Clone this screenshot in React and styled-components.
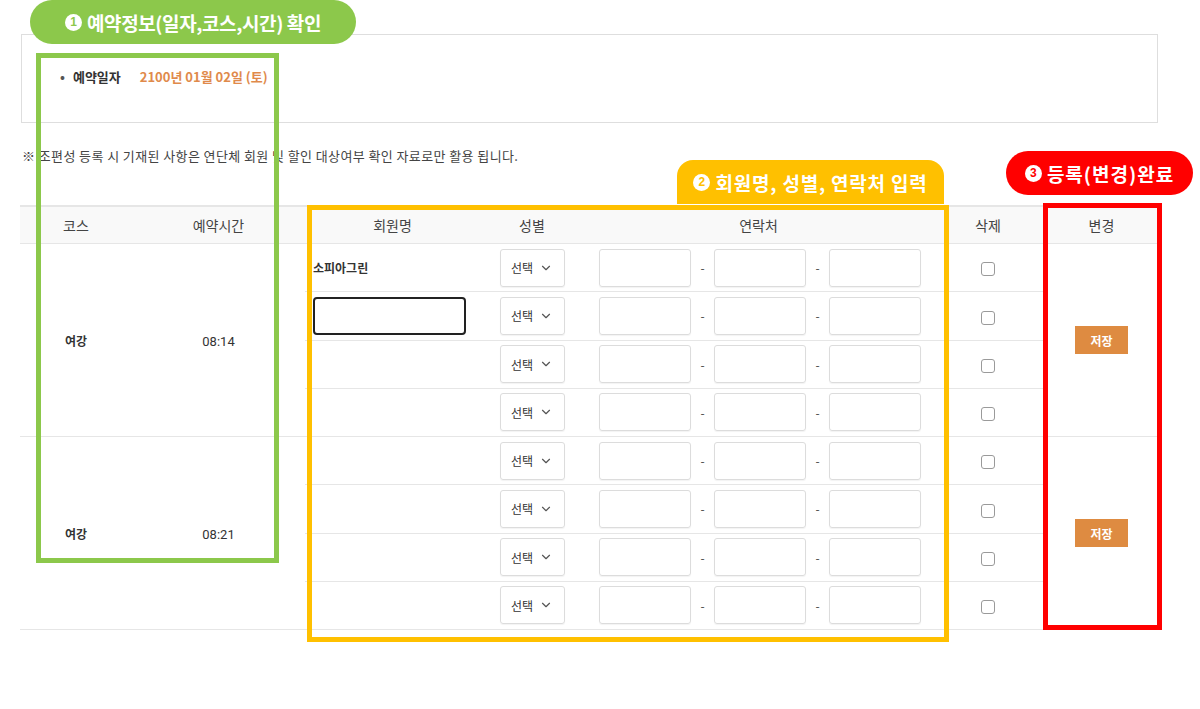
import styled, { createGlobalStyle } from "styled-components";
import { ChevronDown } from "lucide-react";

const GlobalStyle = createGlobalStyle`
  html, body {
    margin: 0;
    padding: 0;
    background: #fff;
    font-family: "Noto Sans CJK KR", "Noto Sans", sans-serif;
    color: #333;
  }
`;

const GREEN = "#8cc84b";
const YELLOW = "#ffc000";
const RED = "#ff0000";

const Page = styled.div`
  position: relative;
  width: 1140px;
  height: 709px;
  padding: 34px 0 0 20px;
  box-sizing: border-box;
`;

const InfoBox = styled.div`
  margin-left: 1px;
  width: 1137px;
  height: 89px;
  box-sizing: border-box;
  border: 1px solid #dedede;
  padding: 33px 0 0 38px;
  display: flex;
  align-items: flex-start;
  gap: 19px;
  font-size: 13px;
  line-height: 18px;
`;

const Label = styled.span`
  font-weight: 700;
  color: #333;
  &::before {
    content: "•";
    margin-right: 8px;
    color: #555;
  }
`;

const DateText = styled.span`
  color: #e08a4b;
  font-weight: 700;
`;

const Notice = styled.p`
  margin: 24px 0 0 2px;
  font-size: 13px;
  line-height: 18px;
  letter-spacing: 0.4px;
  color: #444;
`;

const Table = styled.table`
  margin-top: 40px;
  width: 1140px;
  border-collapse: collapse;
  table-layout: fixed;
  font-size: 14px;
`;

const Th = styled.th`
  height: 36px;
  padding: 0;
  font-weight: 400;
  color: #444;
  background: #f9f9f9;
  border-top: 2px solid #e6e6e6;
  border-bottom: 1px solid #e6e6e6;
  text-align: center;
`;

const Tr = styled.tr`
  height: 48.25px;
`;

const Td = styled.td`
  padding: 0 ${(p) => (p.$left ? "8px" : "0")};
  border-bottom: 1px solid #e6e6e6;
  text-align: ${(p) => (p.$left ? "left" : "center")};
  vertical-align: middle;
  font-size: 12px;
  color: #333;
  font-weight: ${(p) => p.$weight || 400};
`;

const TimeText = styled.span`
  font-size: 13px;
  font-family: Roboto, "Noto Sans CJK KR", sans-serif;
`;

const NameInput = styled.div`
  width: 153px;
  height: 38px;
  box-sizing: border-box;
  border: 2px solid #222;
  border-radius: 4px;
  background: #fff;
`;

const Select = styled.div`
  margin: 0 auto;
  width: 65px;
  height: 38px;
  box-sizing: border-box;
  border: 1px solid #dcdcdc;
  border-radius: 3px;
  box-shadow: 0 1px 1px rgba(0, 0, 0, 0.05);
  display: flex;
  align-items: center;
  justify-content: center;
  gap: 6px;
  font-size: 12px;
  color: #333;
`;

const Phone = styled.div`
  display: flex;
  align-items: center;
  padding-left: 15px;
`;

const PhoneBox = styled.div`
  width: 92px;
  height: 38px;
  box-sizing: border-box;
  border: 1px solid #dcdcdc;
  border-radius: 3px;
  box-shadow: 0 1px 1px rgba(0, 0, 0, 0.05);
`;

const Dash = styled.span`
  width: 23px;
  text-align: center;
  font-size: 12px;
  color: #444;
`;

const Check = styled.span`
  display: inline-block;
  width: 12px;
  height: 12px;
  border: 1.5px solid #9a9a9a;
  border-radius: 3px;
  vertical-align: middle;
`;

const SaveButton = styled.button`
  width: 53px;
  height: 28px;
  border: 0;
  background: #de8b41;
  color: #fff;
  font-family: inherit;
  font-size: 12px;
  font-weight: 700;
  padding: 0;
`;

const Pill = styled.div`
  position: absolute;
  left: ${(p) => p.$x}px;
  top: ${(p) => p.$y}px;
  width: ${(p) => p.$w}px;
  height: 44px;
  border-radius: ${(p) => (p.$tab ? "16px 16px 0 0" : "22px")};
  background: ${(p) => p.$color};
  color: #fff;
  font-size: 19px;
  font-weight: 700;
  display: flex;
  align-items: center;
  justify-content: center;
  gap: 5px;
  letter-spacing: ${(p) => p.$spacing}px;
`;

const Num = styled.span`
  width: 17px;
  height: 17px;
  border-radius: 50%;
  background: #fff;
  color: ${(p) => p.$color};
  font-size: 12px;
  font-weight: 700;
  line-height: 17px;
  letter-spacing: 0;
  text-align: center;
  font-family: "Liberation Sans", sans-serif;
`;

const Frame = styled.div`
  position: absolute;
  left: ${(p) => p.$x}px;
  top: ${(p) => p.$y}px;
  width: ${(p) => p.$w}px;
  height: ${(p) => p.$h}px;
  box-sizing: border-box;
  border: 5px solid ${(p) => p.$color};
  pointer-events: none;
`;

const groups = [
  { course: "여강", time: "08:14", names: ["소피아그린", "input", "", ""] },
  { course: "여강", time: "08:21", names: ["", "", "", ""] },
];

function Row({ name, first, group }) {
  return (
    <Tr>
      {first && (
        <>
          <Td rowSpan={4} $weight={700}>{group.course}</Td>
          <Td rowSpan={4}><TimeText>{group.time}</TimeText></Td>
        </>
      )}
      <Td $left $weight={700}>
        {name === "input" ? <NameInput /> : name}
      </Td>
      <Td>
        <Select>
          선택 <ChevronDown size={14} color="#555" strokeWidth={2} />
        </Select>
      </Td>
      <Td>
        <Phone>
          <PhoneBox />
          <Dash>-</Dash>
          <PhoneBox />
          <Dash>-</Dash>
          <PhoneBox />
        </Phone>
      </Td>
      <Td><Check /></Td>
      {first && (
        <Td rowSpan={4}>
          <SaveButton>저장</SaveButton>
        </Td>
      )}
    </Tr>
  );
}

export default function App() {
  return (
    <Page>
      <GlobalStyle />
      <InfoBox>
        <Label>예약일자</Label>
        <DateText>2100년 01월 02일 (토)</DateText>
      </InfoBox>
      <Notice>※ 조편성 등록 시 기재된 사항은 연단체 회원 및 할인 대상여부 확인 자료로만 활용 됩니다.</Notice>
      <Table>
        <colgroup>
          <col style={{ width: 112 }} />
          <col style={{ width: 173 }} />
          <col style={{ width: 175 }} />
          <col style={{ width: 104 }} />
          <col style={{ width: 349 }} />
          <col style={{ width: 110 }} />
          <col style={{ width: 117 }} />
        </colgroup>
        <thead>
          <tr>
            <Th>코스</Th>
            <Th>예약시간</Th>
            <Th>회원명</Th>
            <Th>성별</Th>
            <Th>연락처</Th>
            <Th>삭제</Th>
            <Th>변경</Th>
          </tr>
        </thead>
        <tbody>
          {groups.map((g) =>
            g.names.map((n, i) => (
              <Row key={g.time + i} name={n} first={i === 0} group={g} />
            ))
          )}
        </tbody>
      </Table>

      <Frame $x={36} $y={53} $w={243} $h={510} $color={GREEN} />
      <Pill $x={30} $y={0} $w={326} $color={GREEN} $spacing={-0.4}>
        <Num $color={GREEN}>1</Num>예약정보(일자,코스,시간) 확인
      </Pill>

      <Frame $x={307} $y={205} $w={642} $h={437} $color={YELLOW} />
      <Pill $x={677} $y={160} $w={267} $color={YELLOW} $spacing={0.8} $tab>
        <Num $color={YELLOW}>2</Num>회원명, 성별, 연락처 입력
      </Pill>

      <Frame $x={1043} $y={203} $w={119} $h={427} $color={RED} />
      <Pill $x={1006} $y={151} $w={187} $color={RED} $spacing={1}>
        <Num $color={RED}>3</Num>등록(변경)완료
      </Pill>
    </Page>
  );
}
